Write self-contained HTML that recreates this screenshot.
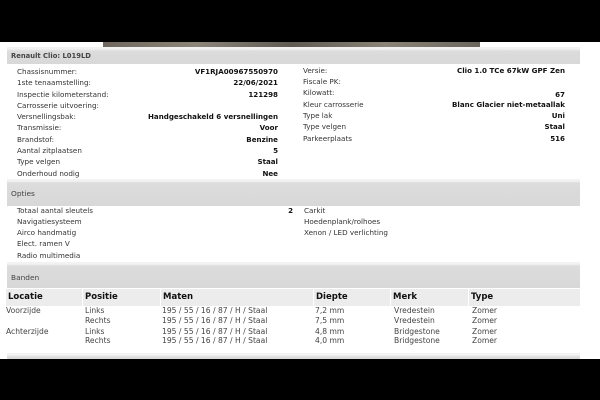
<!DOCTYPE html>
<html><head><meta charset="utf-8"><style>
*{margin:0;padding:0;box-sizing:border-box}
body{width:600px;height:400px;background:#fff;position:relative;overflow:hidden;font-family:"DejaVu Sans","Liberation Sans",sans-serif;font-size:7.2px;color:#333}
.a{position:absolute;white-space:nowrap;line-height:8px}
.b{font-weight:bold;color:#111;font-size:7.1px}
.r{text-align:right}
.t{font-size:7.6px;color:#444}
.bar{position:absolute;left:7px;width:573px;background:linear-gradient(#f2f2f2 0,#f2f2f2 2px,#dcdcdc 4px,#d8d8d8 100%);color:#444;font-size:7.4px}
.bar span{position:absolute;left:4px}
.th{position:absolute;top:289px;height:17px;background:#ececec;font-weight:bold;font-size:8.5px;color:#111;line-height:17px;padding-left:2px}
</style></head><body>
<div style="position:absolute;left:0;top:0;width:600px;height:42px;background:#000"></div>
<div style="position:absolute;left:103px;top:42px;width:377px;height:5px;background:linear-gradient(90deg,#6d675d,#8b857a,#5f5a52,#8a8478,#6a655c)"></div>

<div class="bar" style="top:47px;height:17px"><span class="b" style="top:5px;color:#444;font-size:6.8px">Renault Clio: L019LD</span></div>

<div class="a" style="left:17px;top:68px">Chassisnummer:</div>
<div class="a" style="left:17px;top:79px">1ste tenaamstelling:</div>
<div class="a" style="left:17px;top:90.5px">Inspectie kilometerstand:</div>
<div class="a" style="left:17px;top:102px">Carrosserie uitvoering:</div>
<div class="a" style="left:17px;top:113px">Versnellingsbak:</div>
<div class="a" style="left:17px;top:124px">Transmissie:</div>
<div class="a" style="left:17px;top:135.5px">Brandstof:</div>
<div class="a" style="left:17px;top:147px">Aantal zitplaatsen</div>
<div class="a" style="left:17px;top:158px">Type velgen</div>
<div class="a" style="left:17px;top:169.5px">Onderhoud nodig</div>

<div class="a b r" style="right:322px;top:68px">VF1RJA00967550970</div>
<div class="a b r" style="right:322px;top:79px">22/06/2021</div>
<div class="a b r" style="right:322px;top:90.5px">121298</div>
<div class="a b r" style="right:322px;top:113px">Handgeschakeld 6 versnellingen</div>
<div class="a b r" style="right:322px;top:124px">Voor</div>
<div class="a b r" style="right:322px;top:135.5px">Benzine</div>
<div class="a b r" style="right:322px;top:147px">5</div>
<div class="a b r" style="right:322px;top:158px">Staal</div>
<div class="a b r" style="right:322px;top:169.5px">Nee</div>

<div class="a" style="left:303px;top:67px">Versie:</div>
<div class="a" style="left:303px;top:78px">Fiscale PK:</div>
<div class="a" style="left:303px;top:89px">Kilowatt:</div>
<div class="a" style="left:303px;top:100.5px">Kleur carrosserie</div>
<div class="a" style="left:303px;top:112px">Type lak</div>
<div class="a" style="left:303px;top:123px">Type velgen</div>
<div class="a" style="left:303px;top:134.5px">Parkeerplaats</div>

<div class="a b r" style="right:35px;top:67px">Clio 1.0 TCe 67kW GPF Zen</div>
<div class="a b r" style="right:35px;top:91px">67</div>
<div class="a b r" style="right:35px;top:100.5px">Blanc Glacier niet-metaallak</div>
<div class="a b r" style="right:35px;top:112px">Uni</div>
<div class="a b r" style="right:35px;top:123px">Staal</div>
<div class="a b r" style="right:35px;top:134.5px">516</div>

<div class="bar" style="top:179px;height:27px"><span style="top:10px">Opties</span></div>
<div class="a" style="left:17px;top:207px">Totaal aantal sleutels</div>
<div class="a" style="left:17px;top:218px">Navigatiesysteem</div>
<div class="a" style="left:17px;top:229px">Airco handmatig</div>
<div class="a" style="left:17px;top:240px">Elect. ramen V</div>
<div class="a" style="left:17px;top:252px">Radio multimedia</div>
<div class="a b r" style="right:307px;top:207px">2</div>
<div class="a" style="left:304px;top:207px">Carkit</div>
<div class="a" style="left:304px;top:218px">Hoedenplank/rolhoes</div>
<div class="a" style="left:304px;top:229px">Xenon / LED verlichting</div>

<div class="bar" style="top:262px;height:26px"><span style="top:11px">Banden</span></div>
<div class="th" style="left:6px;width:76px">Locatie</div>
<div class="th" style="left:83px;width:77px">Positie</div>
<div class="th" style="left:161px;width:152px">Maten</div>
<div class="th" style="left:314px;width:76px">Diepte</div>
<div class="th" style="left:391px;width:77px">Merk</div>
<div class="th" style="left:469px;width:111px">Type</div>

<div class="a t" style="left:6px;top:307px">Voorzijde</div>
<div class="a t" style="left:6px;top:328px">Achterzijde</div>
<div class="a t" style="left:85px;top:307px">Links</div>
<div class="a t" style="left:85px;top:317px">Rechts</div>
<div class="a t" style="left:85px;top:328px">Links</div>
<div class="a t" style="left:85px;top:337px">Rechts</div>
<div class="a t" style="left:162px;top:307px">195 / 55 / 16 / 87 / H / Staal</div>
<div class="a t" style="left:162px;top:317px">195 / 55 / 16 / 87 / H / Staal</div>
<div class="a t" style="left:162px;top:328px">195 / 55 / 16 / 87 / H / Staal</div>
<div class="a t" style="left:162px;top:337px">195 / 55 / 16 / 87 / H / Staal</div>
<div class="a t" style="left:315px;top:307px">7,2 mm</div>
<div class="a t" style="left:315px;top:317px">7,5 mm</div>
<div class="a t" style="left:315px;top:328px">4,8 mm</div>
<div class="a t" style="left:315px;top:337px">4,0 mm</div>
<div class="a t" style="left:394px;top:307px">Vredestein</div>
<div class="a t" style="left:394px;top:317px">Vredestein</div>
<div class="a t" style="left:394px;top:328px">Bridgestone</div>
<div class="a t" style="left:394px;top:337px">Bridgestone</div>
<div class="a t" style="left:472px;top:307px">Zomer</div>
<div class="a t" style="left:472px;top:317px">Zomer</div>
<div class="a t" style="left:472px;top:328px">Zomer</div>
<div class="a t" style="left:472px;top:337px">Zomer</div>

<div class="bar" style="top:353px;height:6px"></div>
<div style="position:absolute;left:0;top:359px;width:600px;height:41px;background:#000"></div>
</body></html>
